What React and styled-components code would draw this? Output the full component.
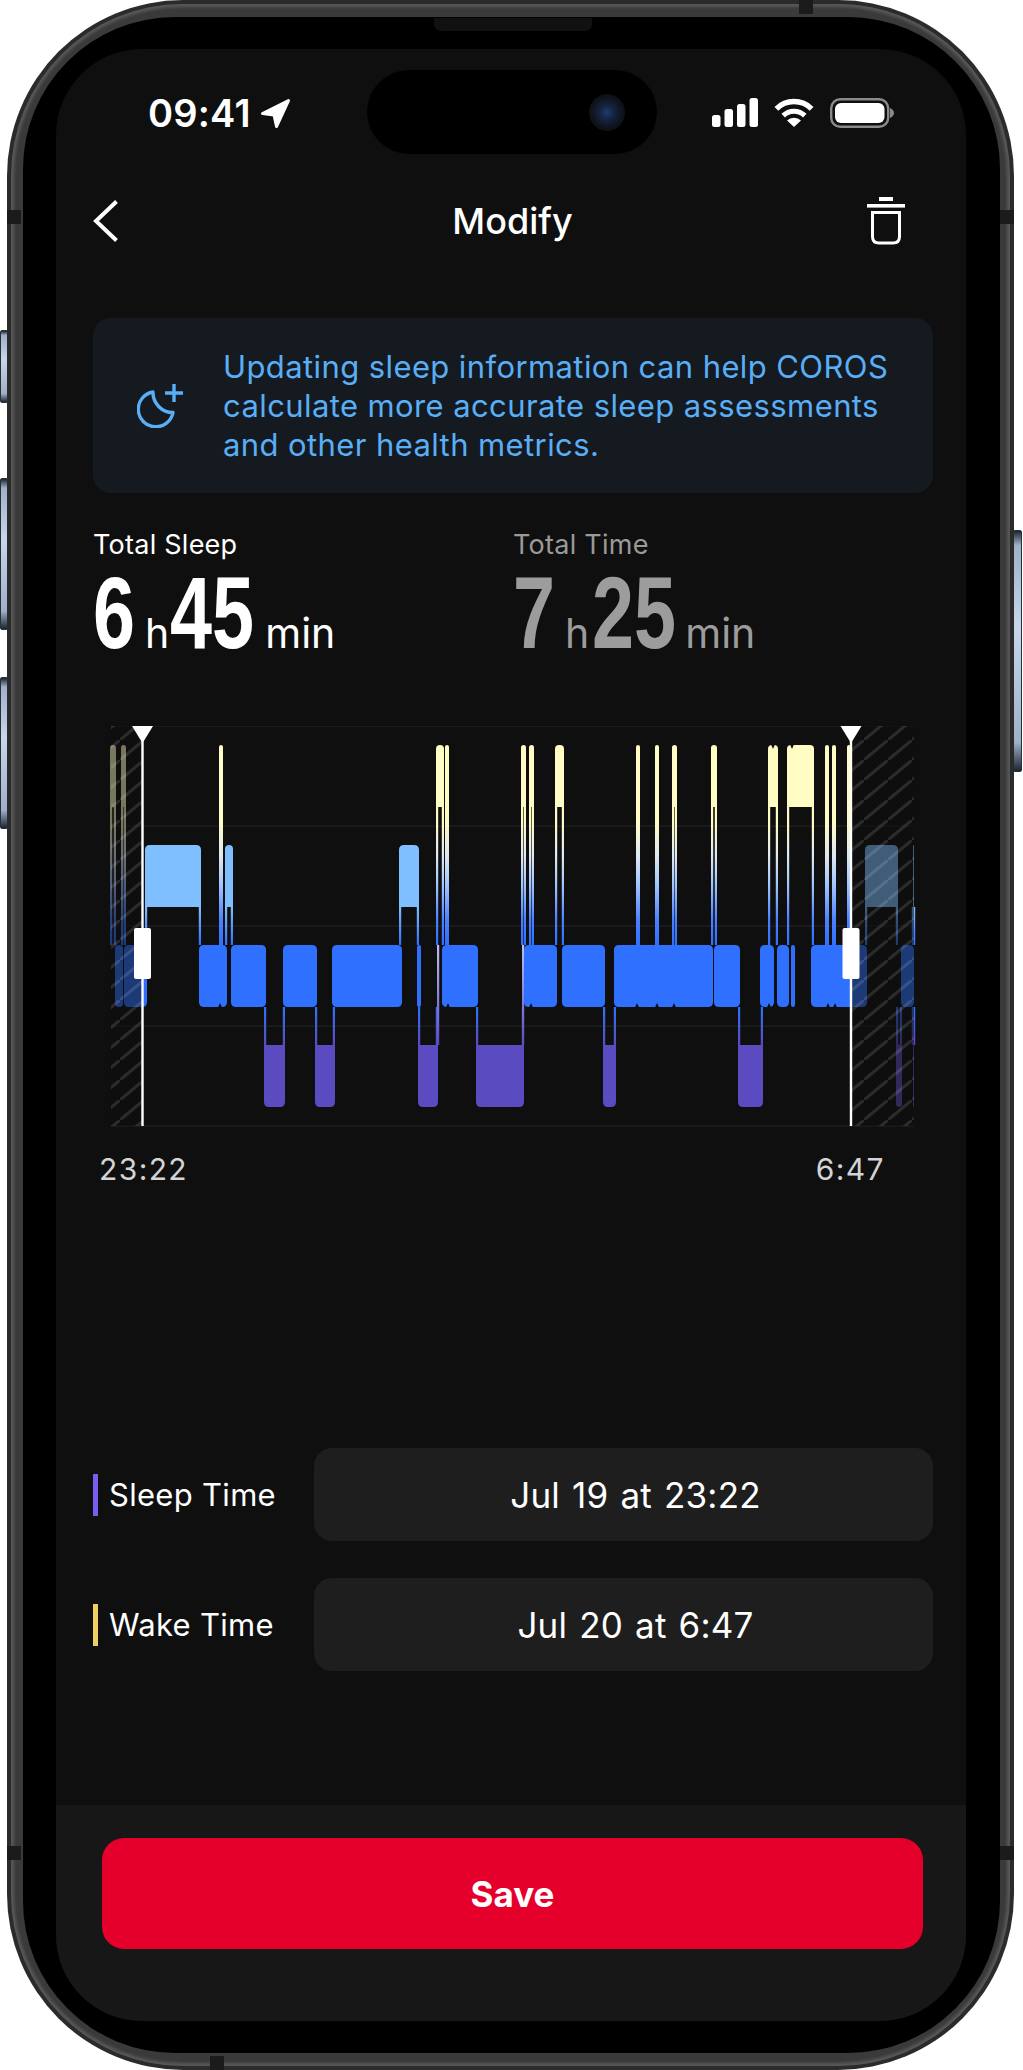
import React from "react";
import styled, { createGlobalStyle } from "styled-components";

const GlobalStyle = createGlobalStyle`
  html, body {
    margin: 0;
    padding: 0;
    background: #fff;
  }
  * {
    box-sizing: border-box;
  }
`;

const Page = styled.div`
  position: relative;
  width: 1023px;
  height: 2070px;
  padding-left: 7px;
  font-family: Inter, "Liberation Sans", sans-serif;
  color: #fff;
  overflow: hidden;
`;

const SideButton = styled.div`
  position: absolute;
  ${(p) => (p.$right ? "left: 1013px;" : "left: 0;")}
  top: ${(p) => p.$top}px;
  width: ${(p) => (p.$right ? 9 : 8)}px;
  height: ${(p) => p.$height}px;
  border: 1px solid #26303c;
  border-radius: 2px;
  background: linear-gradient(
    180deg,
    #1d2630 0%,
    #9fb0c8 6%,
    #c9d6ea 40%,
    #9fb0c8 88%,
    #1d2630 100%
  );
`;

const Phone = styled.div`
  position: relative;
  width: 1007px;
  height: 2070px;
  padding: 4px;
  border-radius: 176px;
  background: #2b2b2b;
`;

const Band = styled.div`
  height: 100%;
  padding: 13px 10px 13px 12px;
  border-radius: 172px;
  background: #3a3a3a;
  box-shadow: inset 0 0 3px 3px #585858;
`;

const Bezel = styled.div`
  position: relative;
  height: 100%;
  padding: 32px 34px 32px 33px;
  border-radius: 152px;
  background: #000;
`;

const Speaker = styled.div`
  position: absolute;
  left: 411px;
  top: 1px;
  width: 158px;
  height: 13px;
  border-radius: 0 0 7px 7px;
  background: #111;
`;

const AntennaBand = styled.div`
  position: absolute;
  background: #1b1b1b;
  left: ${(p) => p.$x}px;
  top: ${(p) => p.$y}px;
  width: ${(p) => p.$w}px;
  height: ${(p) => p.$h}px;
`;

const Screen = styled.div`
  position: relative;
  display: flex;
  flex-direction: column;
  height: 100%;
  border-radius: 86px;
  background: #0f0f0f;
  overflow: hidden;
`;

const Island = styled.div`
  position: absolute;
  left: 311px;
  top: 21px;
  width: 290px;
  height: 84px;
  border-radius: 42px;
  background: #000;
`;

const Camera = styled.div`
  position: absolute;
  right: 32px;
  top: 24px;
  width: 36px;
  height: 37px;
  border-radius: 50%;
  background: radial-gradient(circle at 50% 50%, #1d3a70 0%, #14233d 30%, #0e1219 62%, #0a0c10 100%);
`;

const StatusBar = styled.div`
  display: flex;
  align-items: center;
  justify-content: space-between;
  height: 128px;
  padding: 0 72px 0 92px;
`;

const StatusLeft = styled.div`
  display: flex;
  align-items: center;
  gap: 9px;
`;

const StatusRight = styled.div`
  display: flex;
  align-items: center;
  gap: 16px;
`;

const Clock = styled.span`
  font-size: 38px;
  font-weight: 600;
  line-height: 44px;
  letter-spacing: 0.2px;
`;

const NavBar = styled.div`
  display: grid;
  grid-template-columns: 1fr auto 1fr;
  align-items: center;
  height: 88px;
  padding: 0 37px;
`;

const NavEnd = styled.div`
  display: flex;
  justify-content: ${(p) => (p.$end ? "flex-end" : "flex-start")};
  padding-right: ${(p) => (p.$end ? 24 : 0)}px;
`;

const NavTitle = styled.h1`
  margin: 0 0 0 3px;
  font-size: 36px;
  font-weight: 500;
  line-height: 44px;
`;

const Content = styled.main`
  padding: 53px 33px 0 37px;
`;

const InfoCard = styled.div`
  display: flex;
  align-items: center;
  gap: 38px;
  height: 175px;
  padding-left: 44px;
  border-radius: 18px;
  background: #141a1f;
`;

const InfoText = styled.p`
  margin: 0;
  font-size: 31px;
  line-height: 39px;
  letter-spacing: 0.4px;
  color: #5aaef6;
`;

const Stats = styled.div`
  display: grid;
  grid-template-columns: 420px 1fr;
  margin-top: 36px;
`;

const StatLabel = styled.div`
  font-size: 27px;
  line-height: 32px;
  letter-spacing: 0.25px;
  color: ${(p) => (p.$muted ? "#9a9a9a" : "#fff")};
`;

const StatValue = styled.div`
  display: flex;
  align-items: baseline;
  height: 112px;
  line-height: 104px;
  color: ${(p) => (p.$muted ? "#9c9c9c" : "#fff")};
`;

// no condensed face is installed, so the digits are squeezed into a fixed box
const Digits = styled.span`
  display: inline-block;
  width: ${(p) => p.$width}px;
  margin-left: ${(p) => p.$before || 0}px;
  font-family: "Liberation Sans", sans-serif;
  font-size: 102px;
  font-weight: 700;
  transform: scaleX(0.74);
  transform-origin: 0 50%;
`;

const Unit = styled.span`
  font-size: 41px;
  font-weight: 400;
  margin-left: ${(p) => p.$before || 0}px;
`;

const Chart = styled.svg`
  display: block;
  width: 840px;
  height: 402px;
  margin-top: 53px;
`;

const TimeAxis = styled.div`
  display: flex;
  justify-content: space-between;
  margin-top: 23px;
  padding: 0 48px 0 6px;
`;

const AxisLabel = styled.span`
  font-size: 30px;
  line-height: 36px;
  letter-spacing: 1.4px;
  color: #d4d4d4;
`;

const Rows = styled.div`
  display: flex;
  flex-direction: column;
  gap: 37px;
  margin-top: 261px;
`;

const Row = styled.div`
  display: flex;
  align-items: center;
  height: 93px;
`;

const RowLabel = styled.div`
  flex: 0 0 221px;
  padding-left: 11px;
  border-left: 5px solid ${(p) => p.$color};
  font-size: 31px;
  line-height: 42px;
  letter-spacing: 0.3px;
`;

const Field = styled.div`
  flex: 1;
  display: flex;
  align-items: center;
  justify-content: center;
  height: 100%;
  padding-left: 24px;
  border-radius: 18px;
  background: #1e1e1e;
  font-size: 35px;
  letter-spacing: 0.2px;
  word-spacing: 2px;
`;

const Footer = styled.footer`
  margin-top: auto;
  height: 216px;
  padding: 33px 43px 0 46px;
  background: #171717;
`;

const SaveButton = styled.button`
  display: block;
  width: 100%;
  height: 111px;
  border: 0;
  border-radius: 22px;
  background: #e4002b;
  color: #fff;
  font-family: inherit;
  font-size: 35px;
  font-weight: 700;
`;

// chart data, x in page pixels
const AWAKE = [
  [110, 116], [121, 126], [219, 223], [436, 444], [445, 449], [521, 526], [529, 534],
  [555, 564], [636, 640], [655, 659], [672, 677], [711, 717], [768, 778], [787, 814],
  [825, 829], [832, 836], [847, 851],
];
const LIGHT = [[145, 201], [225, 233], [399, 419], [865, 898], [913, 914]];
const MID = [
  [115, 123], [124, 147], [199, 227], [231, 266], [283, 317], [332, 402], [417, 421],
  [442, 478], [524, 557], [562, 605], [614, 713], [714, 740], [760, 774], [777, 789],
  [791, 795], [811, 867], [901, 914],
];
const DEEP = [[264, 285], [315, 335], [418, 438], [476, 524], [603, 616], [738, 763], [896, 902], [913, 914]];
const BOTTOM_NOTCHES = [220, 448, 531, 637, 657, 674, 769, 828, 835];
const TOP_NOTCHES = [773, 792];
const LONG_LINES = [437, 522];

const RANGE = { awake: [745, 807], light: [845, 907], mid: [945, 1007], deep: [1045, 1107] };
const COLOR = { awake: "#fffcc4", light: "#7fbfff", mid: "#2f70ff", deep: "#5a4bc0" };
const LINE_WIDTH = 2.2;

function barPath(x1, x2, y1, y2, rTop, rBottom) {
  const half = (x2 - x1) / 2;
  const t = Math.min(rTop, half);
  const b = Math.min(rBottom, half);
  return `M${x1} ${y1 + t}Q${x1} ${y1} ${x1 + t} ${y1}H${x2 - t}Q${x2} ${y1} ${x2} ${y1 + t}V${y2 - b}Q${x2} ${y2} ${x2 - b} ${y2}H${x1 + b}Q${x1} ${y2} ${x1} ${y2 - b}Z`;
}

function Bars({ stage, rTop, rBottom }) {
  const [y1, y2] = RANGE[stage];
  const list = { awake: AWAKE, light: LIGHT, mid: MID, deep: DEEP }[stage];
  return (
    <g fill={COLOR[stage]}>
      {list.map(([a, b]) => (
        <path key={a} d={barPath(a, b, y1, y2, rTop, rBottom)} />
      ))}
    </g>
  );
}

function Connectors({ list, y1, y2, fill }) {
  return (
    <g fill={fill}>
      {list.map(([a, b]) => (
        <React.Fragment key={a}>
          <rect x={a} y={y1} width={LINE_WIDTH} height={y2 - y1} />
          <rect x={b - LINE_WIDTH} y={y1} width={LINE_WIDTH} height={y2 - y1} />
        </React.Fragment>
      ))}
    </g>
  );
}

function Handle({ x }) {
  return (
    <g fill="#fff">
      <rect x={x - 1.2} y="730" width="2.4" height="396" />
      <path d="M-10.5 726H10.5L1 741.5Q0 743 -1 741.5Z" transform={`translate(${x} 0)`} />
      <rect x={x - 8.5} y="928" width="17" height="51" rx="2" />
    </g>
  );
}

function SleepChart() {
  return (
    <Chart viewBox="93 726 840 402">
      <defs>
        <linearGradient id="awakeToMid" gradientUnits="userSpaceOnUse" x1="0" y1="807" x2="0" y2="945">
          <stop offset="0" stopColor="#fffcc4" />
          <stop offset="0.1" stopColor="#fffcc4" />
          <stop offset="0.35" stopColor="#dfe9f0" />
          <stop offset="0.57" stopColor="#a0c4ff" />
          <stop offset="0.82" stopColor="#4a80ff" />
          <stop offset="1" stopColor="#2f70ff" />
        </linearGradient>
        <linearGradient id="lightToMid" gradientUnits="userSpaceOnUse" x1="0" y1="907" x2="0" y2="945">
          <stop offset="0" stopColor="#7fbfff" />
          <stop offset="1" stopColor="#2f70ff" />
        </linearGradient>
        <linearGradient id="midToDeep" gradientUnits="userSpaceOnUse" x1="0" y1="1007" x2="0" y2="1045">
          <stop offset="0" stopColor="#2f70ff" />
          <stop offset="1" stopColor="#5a4bc0" />
        </linearGradient>
        <linearGradient id="longLine" gradientUnits="userSpaceOnUse" x1="0" y1="945" x2="0" y2="1045">
          <stop offset="0" stopColor="#b9c0ee" />
          <stop offset="1" stopColor="#5a4bc0" />
        </linearGradient>
        <pattern id="hatch" patternUnits="userSpaceOnUse" width="24" height="20">
          <path d="M-3 22.5L27 -2.5" stroke="rgba(255,255,255,0.12)" strokeWidth="3" />
        </pattern>
      </defs>

      {[726, 826, 926, 1026, 1126].map((y) => (
        <rect key={y} x="111" y={y - 0.5} width="803" height="1.2" fill="#222" />
      ))}

      <Connectors list={AWAKE} y1={807} y2={945} fill="url(#awakeToMid)" />
      <Connectors list={LIGHT} y1={907} y2={945} fill="url(#lightToMid)" />
      <Connectors list={DEEP} y1={1007} y2={1045} fill="url(#midToDeep)" />
      {LONG_LINES.map((x) => (
        <rect key={x} x={x} y="945" width={LINE_WIDTH} height="100" fill="url(#longLine)" />
      ))}

      <Bars stage="awake" rTop={4} rBottom={0} />
      <Bars stage="light" rTop={5} rBottom={0} />
      <Bars stage="mid" rTop={5} rBottom={5} />
      <Bars stage="deep" rTop={0} rBottom={5} />

      <g fill="#0f0f0f">
        {BOTTOM_NOTCHES.map((x) => (
          <path key={x} d={`M${x - 2} 1007.5L${x} 1003L${x + 2} 1007.5Z`} />
        ))}
        {TOP_NOTCHES.map((x) => (
          <path key={x} d={`M${x - 2} 744.5L${x} 749L${x + 2} 744.5Z`} />
        ))}
      </g>

      <rect x="110" y="726" width="32" height="400" fill="rgba(15,15,15,0.56)" />
      <rect x="851" y="726" width="63" height="400" fill="rgba(15,15,15,0.56)" />
      <rect x="111" y="726" width="31" height="400" fill="url(#hatch)" />
      <rect x="851" y="726" width="63" height="400" fill="url(#hatch)" />

      <Handle x={142.5} />
      <Handle x={851} />
    </Chart>
  );
}

function SignalIcon() {
  return (
    <svg width="46" height="30" viewBox="0 0 46 30">
      <rect x="0" y="17" width="8.5" height="12" rx="2.5" fill="#fff" />
      <rect x="12.5" y="11" width="8.5" height="18" rx="2.5" fill="#fff" />
      <rect x="25" y="6" width="8.5" height="23" rx="2.5" fill="#fff" />
      <rect x="37.5" y="0" width="8.5" height="29" rx="2.5" fill="#fff" />
    </svg>
  );
}

function WifiIcon() {
  return (
    <svg width="40" height="30" viewBox="0 0 40 30">
      <path d="M2.4 10.8A25 25 0 0 1 37.6 10.8" fill="none" stroke="#fff" strokeWidth="5.4" />
      <path d="M9.2 17.6A15.4 15.4 0 0 1 30.8 17.6" fill="none" stroke="#fff" strokeWidth="5" />
      <path d="M20 29L13 22.6A10 10 0 0 1 27 22.6Z" fill="#fff" />
    </svg>
  );
}

function BatteryIcon() {
  return (
    <svg width="64" height="30" viewBox="0 0 64 30">
      <rect x="1.2" y="1.2" width="57" height="27.6" rx="9" fill="none" stroke="#8a8a8a" strokeWidth="2.4" />
      <rect x="5" y="5" width="49.5" height="20" rx="6" fill="#fff" />
      <path d="M60 10Q64 12 64 15Q64 18 60 20Z" fill="#8a8a8a" />
    </svg>
  );
}

function LocationIcon() {
  return (
    <svg width="31" height="31" viewBox="0 0 31 31">
      <path
        d="M28.5 2.5L2.5 15.5L14 17L16.5 28.5Z"
        fill="#fff"
        stroke="#fff"
        strokeWidth="3"
        strokeLinejoin="round"
      />
    </svg>
  );
}

function BackIcon() {
  return (
    <svg width="26" height="44" viewBox="0 0 26 44">
      <path d="M23.5 2.5L3 22L23.5 41.5" fill="none" stroke="#fff" strokeWidth="4" />
    </svg>
  );
}

function TrashIcon() {
  return (
    <svg width="38" height="48" viewBox="0 0 38 48">
      <rect x="12" y="0" width="14" height="4" fill="#fff" />
      <rect x="0" y="7" width="38" height="3.6" fill="#fff" />
      <path
        d="M5.5 15.5H32.5V39.5Q32.5 46 26 46H12Q5.5 46 5.5 39.5Z"
        fill="none"
        stroke="#fff"
        strokeWidth="3"
      />
    </svg>
  );
}

function MoonIcon() {
  return (
    <svg width="48" height="45" viewBox="135 385 48 45" fill="none" stroke="#5aaef6" strokeWidth="3.4">
      <path d="M151 394A17.5 17.5 0 1 0 171 414.5A20 20 0 0 1 151 394Z" strokeLinejoin="round" />
      <path d="M172 386V404M163 395H181" />
    </svg>
  );
}

export default function App() {
  return (
    <Page>
      <GlobalStyle />
      <SideButton $top={330} $height={73} />
      <SideButton $top={478} $height={152} />
      <SideButton $top={677} $height={152} />
      <SideButton $right $top={530} $height={242} />
      <Phone>
        <AntennaBand $x={792} $y={0} $w={14} $h={14} />
        <AntennaBand $x={0} $y={210} $w={14} $h={14} />
        <AntennaBand $x={993} $y={210} $w={14} $h={14} />
        <AntennaBand $x={0} $y={1846} $w={14} $h={14} />
        <AntennaBand $x={993} $y={1846} $w={14} $h={14} />
        <AntennaBand $x={203} $y={2056} $w={14} $h={14} />
        <Band>
          <Bezel>
            <Speaker />
            <Screen>
              <Island>
                <Camera />
              </Island>
              <StatusBar>
                <StatusLeft>
                  <Clock>09:41</Clock>
                  <LocationIcon />
                </StatusLeft>
                <StatusRight>
                  <SignalIcon />
                  <WifiIcon />
                  <BatteryIcon />
                </StatusRight>
              </StatusBar>
              <NavBar>
                <NavEnd>
                  <BackIcon />
                </NavEnd>
                <NavTitle>Modify</NavTitle>
                <NavEnd $end>
                  <TrashIcon />
                </NavEnd>
              </NavBar>
              <Content>
                <InfoCard>
                  <MoonIcon />
                  <InfoText>
                    Updating sleep information can help COROS
                    <br />
                    calculate more accurate sleep assessments
                    <br />
                    and other health metrics.
                  </InfoText>
                </InfoCard>
                <Stats>
                  <div>
                    <StatLabel>Total Sleep</StatLabel>
                    <StatValue>
                      <Digits $width={44}>6</Digits>
                      <Unit $before={8}>h</Unit>
                      <Digits $width={84} $before={1}>45</Digits>
                      <Unit $before={11}>min</Unit>
                    </StatValue>
                  </div>
                  <div>
                    <StatLabel $muted>Total Time</StatLabel>
                    <StatValue $muted>
                      <Digits $width={44}>7</Digits>
                      <Unit $before={8}>h</Unit>
                      <Digits $width={84} $before={3}>25</Digits>
                      <Unit $before={9}>min</Unit>
                    </StatValue>
                  </div>
                </Stats>
                <SleepChart />
                <TimeAxis>
                  <AxisLabel>23:22</AxisLabel>
                  <AxisLabel>6:47</AxisLabel>
                </TimeAxis>
                <Rows>
                  <Row>
                    <RowLabel $color="#7b5cf0">Sleep Time</RowLabel>
                    <Field>Jul 19 at 23:22</Field>
                  </Row>
                  <Row>
                    <RowLabel $color="#efcf60">Wake Time</RowLabel>
                    <Field>Jul 20 at 6:47</Field>
                  </Row>
                </Rows>
              </Content>
              <Footer>
                <SaveButton>Save</SaveButton>
              </Footer>
            </Screen>
          </Bezel>
        </Band>
      </Phone>
    </Page>
  );
}
